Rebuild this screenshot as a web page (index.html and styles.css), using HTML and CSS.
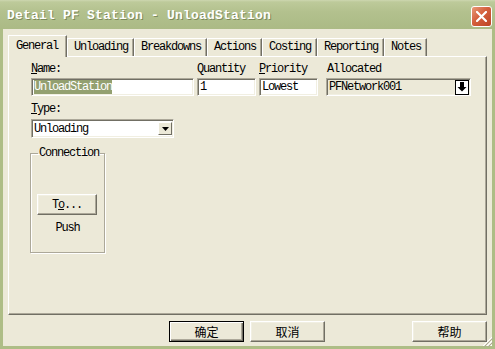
FILE: index.html
```html
<!DOCTYPE html>
<html lang="en">
<head>
    <meta charset="UTF-8">
    <title>Detail PF Station - UnloadStation</title>
    <link rel="stylesheet" href="styles.css">
</head>
<body>
    <div class="window">
        <div class="titlebar">
            <span class="title">Detail PF Station - UnloadStation</span>
            <button class="close" aria-label="Close">
                <svg width="11" height="11" viewBox="0 0 11 11"><path d="M1 1L10 10M10 1L1 10" stroke="#fff" stroke-width="2.2" stroke-linecap="square"/></svg>
            </button>
        </div>

        <div class="client">
            <div class="tabs">
                <div class="tab active">General</div>
                <div class="tab">Unloading</div>
                <div class="tab">Breakdowns</div>
                <div class="tab">Actions</div>
                <div class="tab">Costing</div>
                <div class="tab">Reporting</div>
                <div class="tab">Notes</div>
            </div>

            <div class="panel">
                <div class="row">
                    <div class="field f-name">
                        <div class="label"><u>N</u>ame:</div>
                        <div class="edit"><span class="selected">UnloadStation</span></div>
                    </div>
                    <div class="field f-qty">
                        <div class="label">Quantity</div>
                        <div class="edit">1</div>
                    </div>
                    <div class="field f-prio">
                        <div class="label"><u>P</u>riority</div>
                        <div class="edit">Lowest</div>
                    </div>
                    <div class="field f-alloc">
                        <div class="label">Allocated</div>
                        <div class="edit combo grey">
                            <span>PFNetwork001</span>
                            <span class="drop-btn">
                                <svg width="10" height="10" viewBox="0 0 10 10"><path d="M3 0H7V5H9.5L5 9.5L0.5 5H3Z" fill="#000"/></svg>
                            </span>
                        </div>
                    </div>
                </div>

                <div class="field f-type">
                    <div class="label"><u>T</u>ype:</div>
                    <div class="edit combo">
                        <span>Unloading</span>
                        <span class="combo-btn">
                            <svg width="7" height="4" viewBox="0 0 7 4"><path d="M0 0H7L3.5 4Z" fill="#000"/></svg>
                        </span>
                    </div>
                </div>

                <fieldset class="group">
                    <legend>Connection</legend>
                    <button class="btn to-btn">T<u>o</u>...</button>
                    <div class="push">Push</div>
                </fieldset>
            </div>

            <div class="actions">
                <button class="btn cjk default">确定</button>
                <button class="btn cjk">取消</button>
                <button class="btn cjk help">帮助</button>
            </div>
        </div>

        <svg class="grip" width="12" height="12" viewBox="0 0 12 12">
            <path d="M11 2L2 11M11 6L6 11M11 10L10 11" stroke="#fff" stroke-width="1"/>
            <path d="M12 3L3 12M12 7L7 12" stroke="#aca899" stroke-width="1"/>
        </svg>
    </div>
</body>
</html>
```

FILE: styles.css
```css
body {
    margin: 0;
    font-family: "Liberation Mono", "DejaVu Sans Mono", monospace;
    font-size: 12px;
    letter-spacing: -1.2px;
    color: #000;
}

.window {
    position: relative;
    width: 495px;
    height: 349px;
    display: flex;
    flex-direction: column;
    background-color: #ece9d8;
}

.titlebar {
    height: 29px;
    flex: none;
    display: flex;
    align-items: center;
    justify-content: space-between;
    padding: 0 3px 0 7px;
    background: linear-gradient(#cdd7b0 0, #bdca9a 2px, #b3c18e 40%, #abba85 100%);
}

.title {
    font-size: 13px;
    font-weight: bold;
    letter-spacing: 0.2px;
    color: #fff;
    text-shadow: 1px 1px 0 #7d8a5a;
    padding-top: 2px;
}

.close {
    width: 21px;
    height: 21px;
    margin-top: 3px;
    padding: 0;
    border: 1px solid #fff;
    border-radius: 3px;
    background: linear-gradient(135deg, #e89a78 0, #d45f3c 45%, #bd4426 100%);
    display: flex;
    align-items: center;
    justify-content: center;
}

.client {
    flex: 1;
    display: flex;
    flex-direction: column;
    padding: 6px 5px 4px 5px;
    border: 3px solid #aebd86;
    border-top: none;
}

/* tabs */
.tabs {
    display: flex;
    align-items: flex-end;
    height: 21px;
    padding-left: 2px;
    position: relative;
    z-index: 1;
}

.tab {
    height: 18px;
    line-height: 17px;
    padding: 0 5px 0 6px;
    border-top: 1px solid #fff;
    border-left: 1px solid #fff;
    border-right: 1px solid #716f64;
    box-shadow: inset -1px 0 #aca899;
    box-sizing: border-box;
}

.tab.active {
    height: 22px;
    line-height: 20px;
    margin-bottom: -1px;
    margin-left: -2px;
    padding: 0 8px 0 7px;
    background-color: #ece9d8;
}

.panel {
    height: 259px;
    box-sizing: border-box;
    padding: 5px 0 0 22px;
    border-top: 1px solid #fff;
    border-left: 1px solid #fff;
    border-right: 1px solid #716f64;
    border-bottom: 1px solid #716f64;
    box-shadow: inset -1px -1px #aca899;
}

.row {
    display: flex;
}

.label {
    height: 14px;
    line-height: 14px;
    margin-bottom: 2px;
    white-space: nowrap;
    overflow: hidden;
}

.edit {
    height: 18px;
    line-height: 16px;
    box-sizing: border-box;
    padding: 0 2px;
    background-color: #fff;
    border-top: 1px solid #aca899;
    border-left: 1px solid #aca899;
    border-right: 1px solid #fff;
    border-bottom: 1px solid #fff;
    box-shadow: inset 1px 1px #716f64, inset -1px -1px #f1efe2;
    white-space: nowrap;
}

.selected {
    background-color: #93a070;
    color: #fff;
}

.f-name { width: 163px; }
.f-qty { width: 59px; margin-left: 3px; }
.f-prio { width: 59px; margin-left: 3px; }
.f-alloc { width: 145px; margin-left: 8px; }

.f-alloc .label { padding-left: 1px; }

.combo {
    display: flex;
    align-items: center;
    justify-content: space-between;
}

.grey {
    background-color: #ece9d8;
}

.drop-btn {
    width: 14px;
    height: 15px;
    margin-right: -1px;
    box-sizing: border-box;
    border: 1px solid #000;
    background-color: #fff;
    display: flex;
    align-items: center;
    justify-content: center;
}

.f-type {
    width: 143px;
    margin-top: 6px;
}

.f-type .label {
    margin-bottom: 3px;
}

.f-type .edit {
    height: 19px;
}

.combo-btn {
    width: 14px;
    height: 13px;
    margin-right: -1px;
    box-sizing: border-box;
    background-color: #ece9d8;
    border-top: 1px solid #fff;
    border-left: 1px solid #fff;
    border-right: 1px solid #716f64;
    border-bottom: 1px solid #716f64;
    display: flex;
    align-items: center;
    justify-content: center;
}

/* connection group */
.group {
    width: 75px;
    box-sizing: border-box;
    margin: 8px 0 0 -1px;
    padding: 0 6px 17px 6px;
    min-inline-size: 0;
    border: 1px solid #aca899;
    box-shadow: inset 1px 1px #fff, 1px 1px #fff;
}

.group legend {
    line-height: 14px;
    padding: 0 1px;
    margin-left: 1px;
}

.btn {
    font-family: inherit;
    font-size: 12px;
    letter-spacing: -1.2px;
    color: #000;
    padding: 0;
    box-sizing: border-box;
    background-color: #ece9d8;
    border-top: 1px solid #fff;
    border-left: 1px solid #fff;
    border-right: 1px solid #716f64;
    border-bottom: 1px solid #716f64;
    box-shadow: inset -1px -1px #aca899, inset 1px 1px #f1efe2;
}

.to-btn {
    display: block;
    width: 60px;
    height: 21px;
    margin-top: 34px;
}

.push {
    text-align: center;
    line-height: 14px;
    margin-top: 6px;
}

/* bottom buttons */
.actions {
    display: flex;
    margin-top: 6px;
    padding-left: 161px;
}

.cjk {
    width: 75px;
    height: 21px;
    font-family: "Noto Sans CJK SC", sans-serif;
    font-size: 12px;
    letter-spacing: 0;
    margin-right: 6px;
}

.default {
    border: 1px solid #000;
    box-shadow: inset 1px 1px #fff, inset -1px -1px #716f64, inset -2px -2px #aca899;
}

.help {
    margin-left: auto;
    margin-right: 0;
}

.grip {
    position: absolute;
    right: 2px;
    bottom: 2px;
}
```
